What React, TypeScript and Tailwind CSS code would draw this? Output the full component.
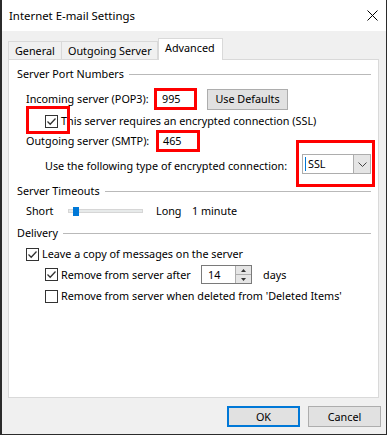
import React from 'react';

const Check = ({ checked }: { checked?: boolean }) => (
  <span className="w-[13px] h-[13px] border border-[#333333] bg-white flex items-center justify-center shrink-0">
    {checked && (
      <svg width="11" height="11" viewBox="0 0 11 11">
        <path d="M1.5 5.5 L4.2 8.2 L9.5 2.5" fill="none" stroke="#333333" strokeWidth="1.3" />
      </svg>
    )}
  </span>
);

const GroupLabel = ({ text, className }: { text: string; className: string }) => (
  <div className={`h-[16px] flex items-center pl-[8px] pr-[7px] ${className}`}>
    <span>{text}</span>
    <span className="flex-1 h-px bg-[#b9b9b9] ml-[5px]" />
  </div>
);

const App = () => {
  return (
    <div className="w-[388px] h-[436px] bg-white font-['Segoe_UI','Noto_Sans',sans-serif] text-[10.8px] leading-[16px] text-black whitespace-nowrap">
      <div className="w-[387px] h-[435px] border-l-2 border-r border-b border-[#2b2b2b] bg-[#f0f0f0] flex flex-col">
        {/* title bar */}
        <div className="h-[31px] bg-white flex items-center justify-between pl-[7px] pr-[8px] shrink-0">
          <span className="text-[11.4px]">Internet E-mail Settings</span>
          <svg width="11" height="11" viewBox="0 0 11 11">
            <path d="M0.5 0.5 L10.5 10.5 M10.5 0.5 L0.5 10.5" stroke="#000" strokeWidth="1" />
          </svg>
        </div>

        {/* tabs */}
        <div className="mt-[7px] h-[21px] flex items-end pl-[6px] relative z-10 shrink-0">
          <div className="h-[18px] w-[53px] border-t border-l border-[#d9d9d9] flex items-center pl-[6px]">General</div>
          <div className="h-[18px] w-[97px] border-t border-l border-r border-[#d9d9d9] flex items-center pl-[6px]">Outgoing Server</div>
          <div className="h-[22px] w-[65px] -mb-px border-t border-l border-r border-[#d9d9d9] bg-white flex items-start pt-[1px] pl-[6px]">Advanced</div>
        </div>

        {/* panel */}
        <div className="ml-[6px] w-[371px] h-[339px] border border-[#d9d9d9] bg-white shrink-0 flex flex-col">
          <GroupLabel text="Server Port Numbers" className="mt-[6px]" />

          <div className="mt-[6px] h-[22px] flex items-center pl-[17px]">
            <span className="w-[128px]">Incoming server (POP3):</span>
            <div className="w-[43px] h-[22px] border-[3px] border-[#ff0000] flex items-center pl-[5px]">995</div>
            <button className="ml-[10px] w-[81px] h-[21px] bg-[#e1e1e1] border border-[#adadad] flex items-center justify-center">
              Use Defaults
            </button>
          </div>

          <div className="relative mt-[3px] h-[16px] flex items-center pl-[36px]">
            <Check checked />
            <span className="ml-[3px]">This server requires an encrypted connection (SSL)</span>
            <span className="absolute left-[17px] -top-[7px] w-[44px] h-[28px] border-[3px] border-[#ff0000]" />
          </div>

          <div className="mt-[1px] h-[22px] flex items-center pl-[17px]">
            <span className="w-[130px]">Outgoing server (SMTP):</span>
            <div className="w-[44px] h-[22px] border-[3px] border-[#ff0000] flex items-center pl-[4px]">465</div>
          </div>

          <div className="mt-[2px] h-[20px] flex items-center justify-between pl-[36px] pr-[7px]">
            <span className="mt-[3px]">Use the following type of encrypted connection:</span>
            <div className="relative w-[69px] h-[20px] border border-[#adadad] bg-white flex items-center">
              <span className="w-px h-[14px] bg-[#0078d7] ml-[2px]" />
              <span className="ml-[2px] flex-1">SSL</span>
              <span className="w-[17px] h-[18px] bg-[#e5e5e5] border-l border-[#adadad] flex items-center justify-center">
                <svg width="9" height="5" viewBox="0 0 9 5">
                  <path d="M0.5 0.5 L4.5 4.5 L8.5 0.5" fill="none" stroke="#444" strokeWidth="1" />
                </svg>
              </span>
              <span className="absolute -left-[7px] -top-[15px] w-[79px] h-[47px] border-[3px] border-[#ff0000]" />
            </div>
          </div>

          <GroupLabel text="Server Timeouts" className="mt-[9px]" />

          <div className="mt-[4px] h-[16px] flex items-center pl-[17px]">
            <span className="w-[42px]">Short</span>
            <div className="relative w-[75px] h-[4px] bg-[#e7eaea] border border-[#d6d6d6]">
              <span className="absolute left-[4px] -top-[3px] w-[6px] h-[9px] bg-[#0078d7]" />
            </div>
            <span className="ml-[13px] w-[36px]">Long</span>
            <span>1 minute</span>
          </div>

          <GroupLabel text="Delivery" className="mt-[6px]" />

          <div className="mt-[5px] h-[16px] flex items-center pl-[17px]">
            <Check checked />
            <span className="ml-[3px]">Leave a copy of messages on the server</span>
          </div>

          <div className="mt-[3px] h-[19px] flex items-center pl-[36px]">
            <Check checked />
            <span className="ml-[3px] w-[140px]">Remove from server after</span>
            <div className="w-[51px] h-[19px] border border-[#7a7a7a] bg-white flex items-center">
              <span className="flex-1 pl-[6px]">14</span>
              <div className="w-[16px] h-[17px] flex flex-col border-l border-[#adadad]">
                <span className="flex-1 bg-[#e5e5e5] border-b border-[#adadad] flex items-center justify-center">
                  <svg width="5" height="3" viewBox="0 0 5 3"><path d="M0 3 L2.5 0 L5 3 Z" fill="#333" /></svg>
                </span>
                <span className="flex-1 bg-[#e5e5e5] flex items-center justify-center">
                  <svg width="5" height="3" viewBox="0 0 5 3"><path d="M0 0 L2.5 3 L5 0 Z" fill="#333" /></svg>
                </span>
              </div>
            </div>
            <span className="ml-[11px]">days</span>
          </div>

          <div className="mt-[4px] h-[16px] flex items-center pl-[36px]">
            <Check />
            <span className="ml-[3px]">Remove from server when deleted from 'Deleted Items'</span>
          </div>
        </div>

        {/* footer */}
        <div className="mt-[8px] flex justify-end gap-[8px] pr-[5px]">
          <button className="w-[73px] h-[21px] bg-[#e1e1e1] border-2 border-[#0078d7] flex items-center justify-center">OK</button>
          <button className="w-[73px] h-[21px] bg-[#e1e1e1] border border-[#adadad] flex items-center justify-center">Cancel</button>
        </div>
      </div>
    </div>
  );
};

export default App;
